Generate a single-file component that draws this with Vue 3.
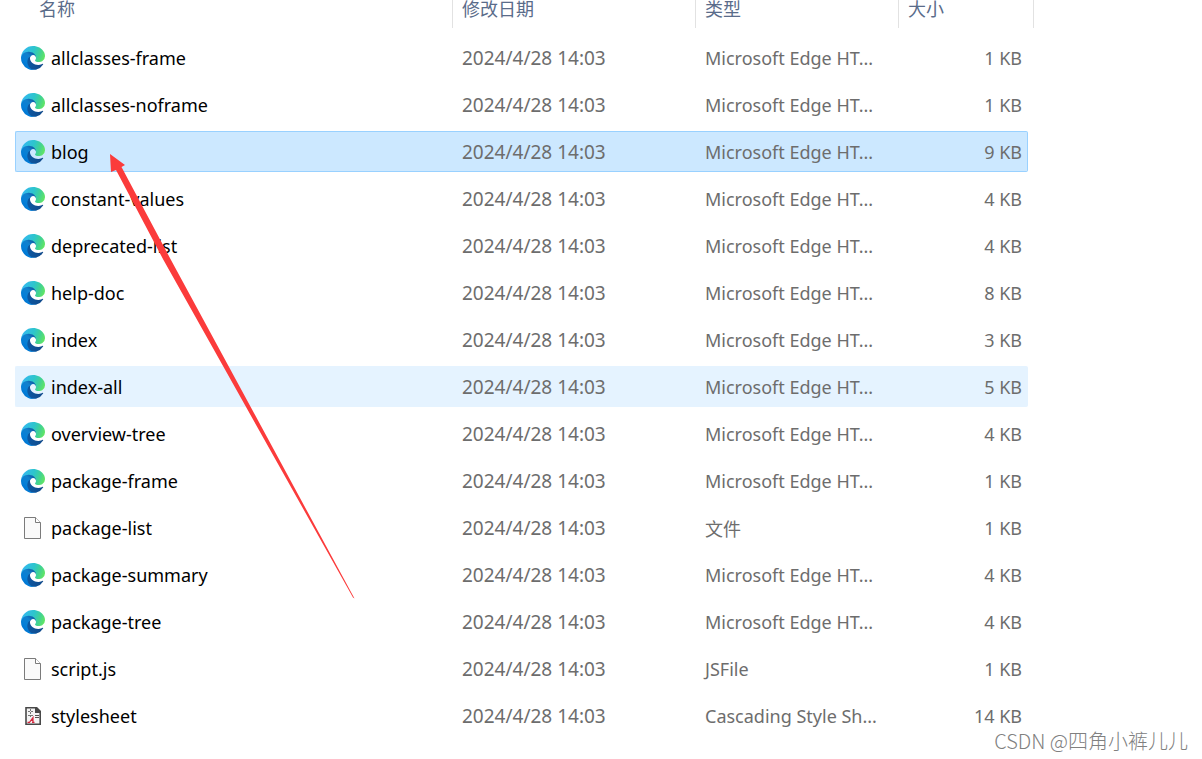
<script setup>
const date = '2024/4/28 14:03'
const edge = 'Microsoft Edge HT...'

const files = [
  { name: 'allclasses-frame', icon: 'edge', type: edge, size: '1 KB' },
  { name: 'allclasses-noframe', icon: 'edge', type: edge, size: '1 KB' },
  { name: 'blog', icon: 'edge', type: edge, size: '9 KB', state: 'selected' },
  { name: 'constant-values', icon: 'edge', type: edge, size: '4 KB' },
  { name: 'deprecated-list', icon: 'edge', type: edge, size: '4 KB' },
  { name: 'help-doc', icon: 'edge', type: edge, size: '8 KB' },
  { name: 'index', icon: 'edge', type: edge, size: '3 KB' },
  { name: 'index-all', icon: 'edge', type: edge, size: '5 KB', state: 'hovered' },
  { name: 'overview-tree', icon: 'edge', type: edge, size: '4 KB' },
  { name: 'package-frame', icon: 'edge', type: edge, size: '1 KB' },
  { name: 'package-list', icon: 'page', type: '文件', size: '1 KB' },
  { name: 'package-summary', icon: 'edge', type: edge, size: '4 KB' },
  { name: 'package-tree', icon: 'edge', type: edge, size: '4 KB' },
  { name: 'script.js', icon: 'page', type: 'JSFile', size: '1 KB' },
  { name: 'stylesheet', icon: 'css', type: 'Cascading Style Sh...', size: '14 KB' },
]
</script>

<template>
  <main class="explorer">
    <svg class="defs" aria-hidden="true">
      <defs>
        <linearGradient id="edge-dark" x1="58" y1="177" x2="236" y2="177" gradientUnits="userSpaceOnUse">
          <stop offset="0" stop-color="#0c59a4" />
          <stop offset="1" stop-color="#114a8b" />
        </linearGradient>
        <linearGradient id="edge-blue" x1="150" y1="95" x2="42" y2="215" gradientUnits="userSpaceOnUse">
          <stop offset="0" stop-color="#0f5fa8" />
          <stop offset="0.3" stop-color="#1280cc" />
          <stop offset="0.7" stop-color="#0680d7" />
          <stop offset="1" stop-color="#0078d4" />
        </linearGradient>
        <linearGradient id="edge-green" x1="20" y1="50" x2="245" y2="135" gradientUnits="userSpaceOnUse">
          <stop offset="0" stop-color="#35b9ee" />
          <stop offset="0.45" stop-color="#2dc5cc" />
          <stop offset="0.75" stop-color="#42d391" />
          <stop offset="1" stop-color="#62e563" />
        </linearGradient>
        <symbol id="icon-edge" viewBox="0 0 256 256">
          <path fill="url(#edge-dark)" transform="translate(-5 -5)" d="M235.68 195.46a93.73 93.73 0 0 1-10.54 4.71 101.87 101.87 0 0 1-35.9 6.46c-47.32 0-88.54-32.55-88.54-74.32A31.48 31.48 0 0 1 117.13 105c-42.8 1.8-53.8 46.4-53.8 72.53 0 73.88 68.09 81.37 82.76 81.37 7.91 0 19.84-2.3 27-4.56l1.31-.44A128.34 128.34 0 0 0 241 201.1a4 4 0 0 0-5.32-5.64z" />
          <path fill="url(#edge-blue)" d="M105.73 241.42A79.2 79.2 0 0 1 83 220.08a80.72 80.72 0 0 1 29.5-120c3.12-1.47 8.45-4.13 15.54-4a32.35 32.35 0 0 1 25.69 13 31.88 31.88 0 0 1 6.36 18.66c0-.21 24.46-79.6-80-79.6-43.9 0-80 41.66-80 78.21a130.15 130.15 0 0 0 12.11 56 128 128 0 0 0 156.38 67.11 75.55 75.55 0 0 1-62.78-8z" />
          <path fill="url(#edge-green)" d="M152.33 148.86c-.81 1.05-3.3 2.5-3.3 5.66 0 2.61 1.7 5.12 4.72 7.23 14.38 10 41.49 8.68 41.56 8.68a59.56 59.56 0 0 0 30.27-8.35A61.38 61.38 0 0 0 256 109.19c.26-22.41-8-37.31-11.34-43.91C223.46 23.84 177.72 0 128 0A128 128 0 0 0 0 126.2c.48-36.54 36.8-66.05 80-66.05 3.5 0 23.46.34 42 10.07 16.34 8.58 24.9 18.94 30.85 29.21 6.18 10.67 7.28 24.15 7.28 29.52s-2.74 13.33-7.8 19.91z" />
        </symbol>
        <symbol id="icon-page" viewBox="0 0 24 24">
          <path fill="#fafafa" stroke="#7b7b7b" d="M3.500 1.500H14.500L19.500 6.500V22.500H3.500Z" />
          <path fill="#fff" stroke="#7b7b7b" d="M14.500 1.500V6.500H19.500" />
        </symbol>
        <symbol id="icon-css" viewBox="0 0 24 24">
          <path fill="#f4f4f4" stroke="#484848" stroke-width="1.600" d="M5 3.800H15L19.200 8V20.200H5Z" />
          <path fill="#484848" d="M14 3H16L20 7V9H14Z" />
          <path fill="none" stroke="#777" stroke-dasharray="2 1" d="M7 7.500H13M9.500 5V13M7 11.500H12" />
          <path fill="none" stroke="#555" d="M14 11.500H18M14 13.500H18" />
          <path fill="none" stroke="#d5273d" stroke-width="1.200" d="M6.500 18.300H8.500L12 13.500V18.300M9.500 16.500H12M11 18.300H13.500" />
        </symbol>
      </defs>
    </svg>

    <table class="files">
      <colgroup>
        <col />
        <col class="col-date" />
        <col class="col-type" />
        <col class="col-size" />
        <col class="col-edge" />
      </colgroup>
      <thead>
        <tr>
          <th scope="col"><button type="button" class="sort first">名称</button></th>
          <th scope="col"><button type="button" class="sort">修改日期</button></th>
          <th scope="col"><button type="button" class="sort">类型</button></th>
          <th scope="col" colspan="2"><button type="button" class="sort">大小</button></th>
        </tr>
      </thead>
      <tbody>
        <tr v-for="file in files" :key="file.name" :class="file.state">
          <td class="name">
            <span class="label">
              <svg class="icon" aria-hidden="true"><use :href="'#icon-' + file.icon" /></svg>
              {{ file.name }}
            </span>
          </td>
          <td class="date">{{ date }}</td>
          <td :class="{ cjk: file.type === '文件' }">{{ file.type }}</td>
          <td class="size">{{ file.size }}</td>
        </tr>
      </tbody>
    </table>

    <svg class="arrow" viewBox="0 0 246 446" aria-hidden="true">
      <path fill="#fb3b3b" d="M0 0L15 11L11.500 13L61 106L244.500 444.500L243 443.500L53.500 106L6 16L1 18Z" />
    </svg>

    <footer class="watermark">CSDN @四角小裤儿儿</footer>
  </main>
</template>

<style>
body {
  margin: 0;
  background: #fff;
}
</style>

<style scoped>
.explorer {
  position: relative;
  display: flow-root;
  overflow: hidden;
  min-height: 100vh;
  box-sizing: border-box;
  padding: 0 168px 0 15px;
  font-family: "Noto Sans", "Noto Sans CJK SC", sans-serif;
  font-size: 18px;
  color: #6d6d6d;
}

.defs {
  position: absolute;
  width: 0;
  height: 0;
}

.files {
  width: 100%;
  margin-top: -6px;
  table-layout: fixed;
  border-collapse: separate;
  border-spacing: 0 6px;
}

.col-date {
  width: 243px;
}

.col-type {
  width: 203px;
}

.col-size {
  width: 129px;
}

.col-edge {
  width: 6px;
}

th {
  padding: 0 0 3px;
}

.sort {
  display: block;
  width: 100%;
  height: 28px;
  padding: 0 9px 12px;
  border: 0;
  border-right: 1px solid #e2e2e2;
  background: none;
  font-family: "Noto Sans CJK SC", sans-serif;
  font-size: 18px;
  font-weight: 400;
  line-height: 16px;
  text-align: left;
  color: #5a6c8a;
}

.sort.first {
  padding-left: 24px;
}

td {
  box-sizing: border-box;
  height: 41px;
  padding: 0 9px;
  border: 0 solid transparent;
  border-width: 1px 0;
  line-height: 24px;
  white-space: nowrap;
}

.name {
  padding-left: 5px;
  border-left-width: 1px;
  border-radius: 2px 0 0 2px;
  color: #000;
}

.label {
  display: flex;
  align-items: center;
  gap: 6px;
}

.icon {
  flex: none;
  width: 24px;
  height: 24px;
}

.date {
  font-size: 19px;
}

.size {
  padding-right: 5px;
  border-right-width: 1px;
  border-radius: 0 2px 2px 0;
  text-align: right;
}

.cjk {
  font-family: "Noto Sans CJK SC", sans-serif;
}

.selected td {
  background: #cce8ff;
  border-color: #99d1ff;
}

.hovered td {
  background: #e5f3ff;
  border-color: #e5f3ff;
}

.arrow {
  position: absolute;
  top: 154px;
  left: 110px;
  width: 246px;
  height: 446px;
  pointer-events: none;
}

.watermark {
  position: absolute;
  right: 14px;
  bottom: 4px;
  font-family: "Noto Sans CJK SC", sans-serif;
  font-size: 20px;
  font-weight: 300;
  line-height: 28px;
  color: #808080;
}
</style>
